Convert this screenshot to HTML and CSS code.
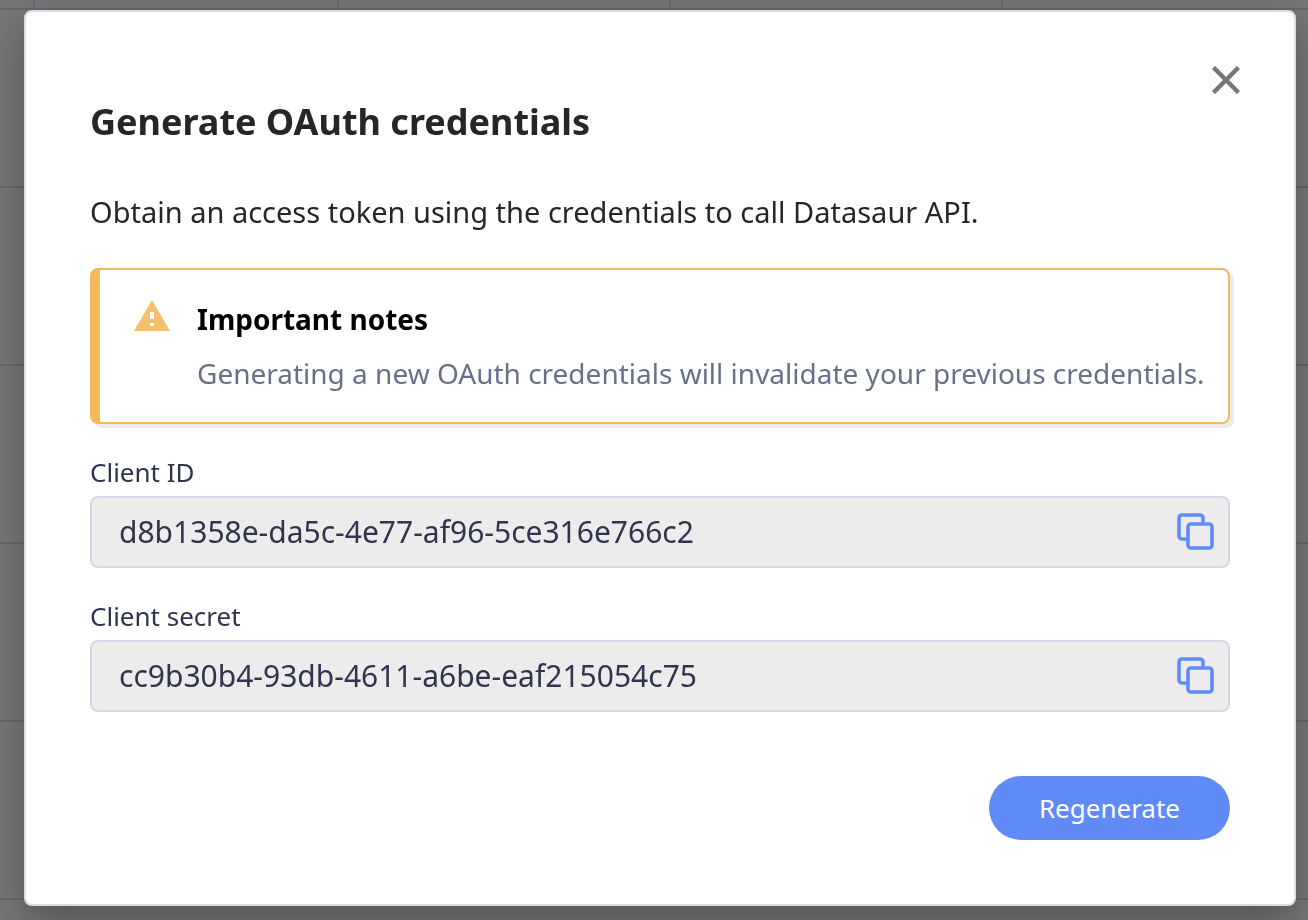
FILE: index.html
```html
<!DOCTYPE html>
<html lang="en">
<head>
<meta charset="utf-8">
<meta name="viewport" content="width=device-width, initial-scale=1">
<title>Generate OAuth credentials</title>
<link rel="stylesheet" href="styles.css">
</head>
<body>
<div class="backdrop" aria-hidden="true">
  <div class="grid-head"><span></span><span></span><span></span><span></span><span></span></div>
  <div class="grid-row"></div>
  <div class="grid-row"></div>
  <div class="grid-row"></div>
  <div class="grid-row"></div>
  <div class="grid-row"></div>
</div>
<main class="dialog" role="dialog" aria-labelledby="dialog-title">
  <button class="close" type="button" aria-label="Close">
    <svg width="28" height="28" viewBox="0 0 28 28" fill="none" stroke="#757575" stroke-width="4.4"><path d="M1.5 1.5l25 25M26.5 1.5l-25 25"/></svg>
  </button>
  <h1 class="title" id="dialog-title">Generate OAuth credentials</h1>
  <p class="intro">Obtain an access token using the credentials to call Datasaur API.</p>
  <section class="notice">
    <svg class="notice-icon" width="36" height="32" viewBox="0 0 36 32"><path fill="#f5c06e" d="M18 0l18 31H0z"/><path fill="#fff" d="M16 12h4v7h-4zM16 23h4v3h-4z"/></svg>
    <div>
      <h2 class="notice-title">Important notes</h2>
      <p class="notice-text">Generating a new OAuth credentials will invalidate your previous credentials.</p>
    </div>
  </section>
  <form class="form">
    <div class="group">
      <label class="label" for="client-id">Client ID</label>
      <div class="field">
        <input class="input" id="client-id" type="text" readonly value="d8b1358e-da5c-4e77-af96-5ce316e766c2">
        <button class="copy" type="button" aria-label="Copy client ID">
          <svg width="38" height="38" viewBox="0 0 38 38" fill="none" stroke="#5f8df8" stroke-width="3.6"><path d="M11 26H6a3 3 0 0 1-3-3V5a3 3 0 0 1 3-3h18a3 3 0 0 1 3 3v5"/><rect x="12" y="11" width="24" height="24" rx="3"/></svg>
        </button>
      </div>
    </div>
    <div class="group">
      <label class="label" for="client-secret">Client secret</label>
      <div class="field">
        <input class="input" id="client-secret" type="text" readonly value="cc9b30b4-93db-4611-a6be-eaf215054c75">
        <button class="copy" type="button" aria-label="Copy client secret">
          <svg width="38" height="38" viewBox="0 0 38 38" fill="none" stroke="#5f8df8" stroke-width="3.6"><path d="M11 26H6a3 3 0 0 1-3-3V5a3 3 0 0 1 3-3h18a3 3 0 0 1 3 3v5"/><rect x="12" y="11" width="24" height="24" rx="3"/></svg>
        </button>
      </div>
    </div>
    <button class="submit" type="button">Regenerate</button>
  </form>
</main>
</body>
</html>
```
FILE: styles.css
```css
* { box-sizing: border-box; }

body {
  margin: 0;
  padding: 10px 12px 14px 24px;
  background: #777;
  color: #262626;
  font-family: "Noto Sans", sans-serif;
}

h1, h2, p { margin: 0; }

button { padding: 0; border: 0; background: none; font-family: inherit; cursor: pointer; }

.backdrop {
  position: fixed;
  inset: 0;
  z-index: -1;
  overflow: hidden;
}

.grid-head {
  display: grid;
  grid-template-columns: 35px 304px 332px 332px 1fr;
  height: 10px;
  background: #747677;
  border-bottom: 2px solid #67686e;
}

.grid-head span { border-right: 2px solid #686a72; }
.grid-head span:last-child { border-right: 0; }
.grid-row { height: 178px; border-bottom: 2px solid #67676d; }

.dialog {
  position: relative;
  padding: 86px 64px 64px;
  background: #fff;
  border: 2px solid #dedede;
  border-radius: 8px;
  box-shadow: 0 16px 40px rgba(0, 0, 0, 0.3);
}

.close {
  position: absolute;
  top: 54px;
  right: 54px;
  display: flex;
}

.title { margin-bottom: 46px; font-size: 36px; line-height: 48px; }
.intro { margin-bottom: 36px; font-size: 29px; line-height: 40px; }

.notice {
  display: flex;
  gap: 27px;
  padding: 30px 20px 30px 34px;
  border: 2px solid #f4b95f;
  border-left-width: 10px;
  border-radius: 8px;
  box-shadow: 4px 4px 0 #ebebeb;
}

.notice-icon { flex: none; }
.notice-title { margin-bottom: 16px; color: #000; font-size: 28px; line-height: 38px; }
.notice-text { color: #69708a; font-size: 28px; line-height: 38px; }

.form { display: flex; flex-direction: column; gap: 32px; margin-top: 32px; }
.group { display: flex; flex-direction: column; gap: 8px; }
.label { color: #30354f; font-size: 26px; line-height: 32px; }

.field {
  display: flex;
  align-items: center;
  height: 72px;
  padding: 0 14px 0 27px;
  background: #edebec;
  border: 2px solid #d2d5e4;
  border-radius: 8px;
}

.input {
  flex: 1;
  min-width: 0;
  padding: 0;
  border: 0;
  outline: 0;
  background: none;
  color: #30354f;
  font-family: inherit;
  font-size: 30px;
  line-height: 40px;
}

.copy { display: flex; }

.submit {
  align-self: flex-end;
  height: 64px;
  margin-top: 32px;
  padding: 0 50px;
  border-radius: 32px;
  background: #608bf7;
  color: #fff;
  font-size: 26px;
  line-height: 32px;
}
```
